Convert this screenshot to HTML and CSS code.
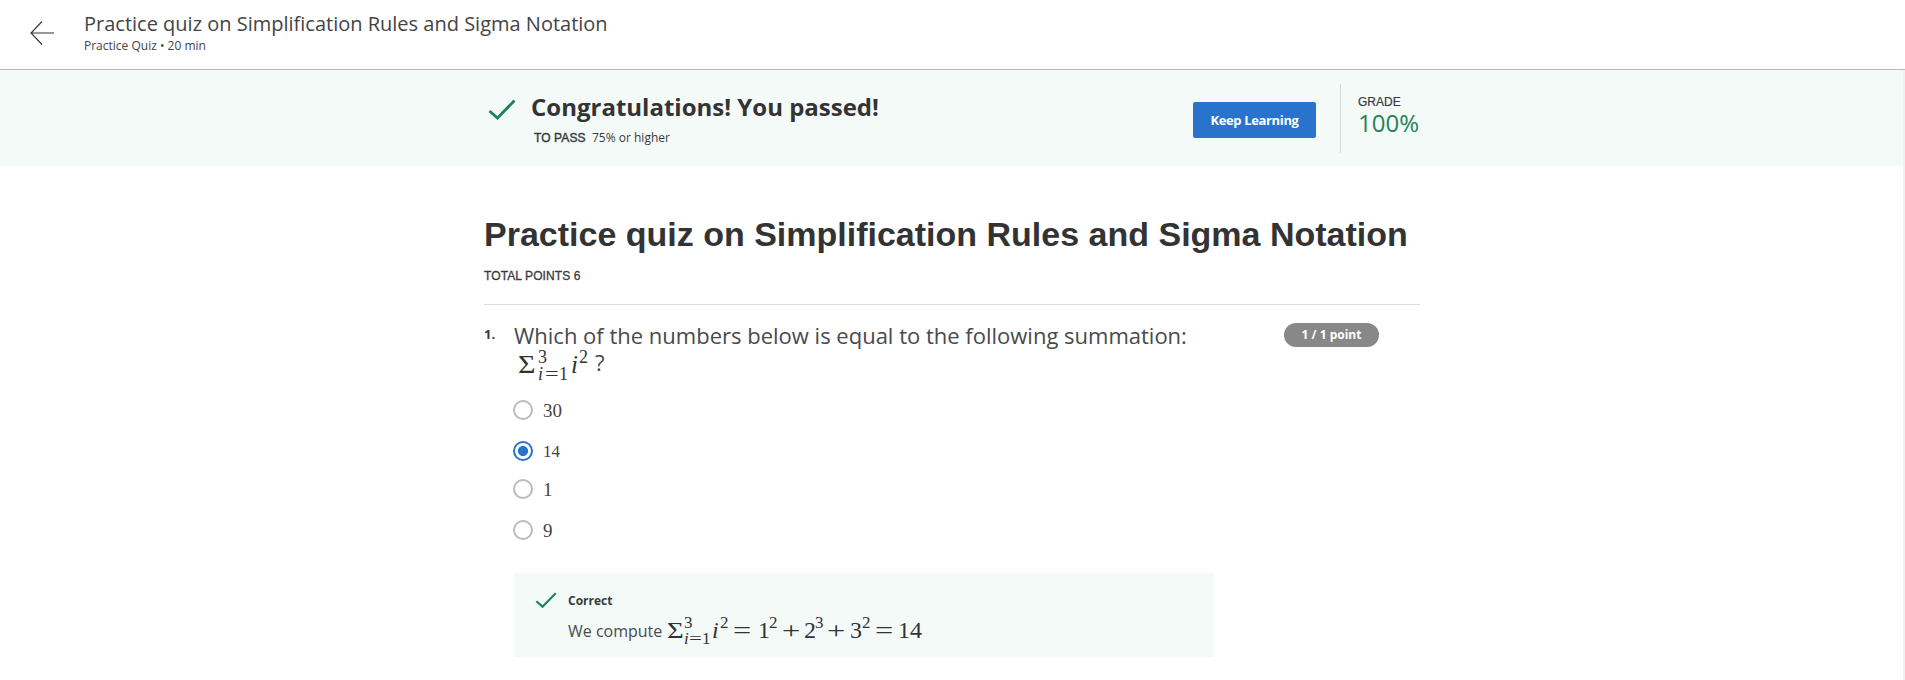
FILE: index.html
```html
<!DOCTYPE html>
<html lang="en">
<head>
<meta charset="utf-8">
<title>Practice quiz on Simplification Rules and Sigma Notation</title>
<link rel="stylesheet" href="styles.css">
</head>
<body>
<header class="topbar">
  <svg class="back" width="24" height="24" viewBox="0 0 24 24"><path d="M12 .5 1 12l11 11.500M1 12h23"/></svg>
  <div>
    <div class="topbar-title"><span>Practice quiz on Simplification Rules and Sigma Notation</span></div>
    <div class="topbar-sub"><span>Practice Quiz • 20 min</span></div>
  </div>
</header>
<div class="page">
  <div class="content">
    <section class="banner">
      <svg class="check" width="28" height="22" viewBox="0 0 28 22"><path d="M1.500 12 9.500 19 26.500 1.500"/></svg>
      <div class="banner-text">
        <div class="congrats"><span>Congratulations! You passed!</span></div>
        <div class="to-pass"><b>TO PASS</b><span>75% or higher</span></div>
      </div>
      <button class="keep"><span>Keep Learning</span></button>
      <div class="grade">
        <div class="grade-label"><span>GRADE</span></div>
        <div class="grade-value"><span>100%</span></div>
      </div>
    </section>
    <main class="quiz">
      <h1><span>Practice quiz on Simplification Rules and Sigma Notation</span></h1>
      <div class="points"><span>TOTAL POINTS 6</span></div>
      <section class="question">
        <div class="number">1.</div>
        <div class="body">
          <div class="prompt"><span>Which of the numbers below is equal to the following summation:</span></div>
          <div class="math math-q">
            <span class="sigma">Σ</span>
            <span class="scripts"><span class="up">3</span><span class="down"><i>i</i><span class="eq">=</span><span>1</span></span></span>
            <i>i</i><span class="up">2</span><span class="mark">?</span>
          </div>
          <div class="options">
            <label class="option"><span class="radio"></span><span>30</span></label>
            <label class="option picked"><span class="radio"></span><span>14</span></label>
            <label class="option"><span class="radio"></span><span>1</span></label>
            <label class="option"><span class="radio"></span><span>9</span></label>
          </div>
          <div class="feedback">
            <svg class="check small" width="22" height="17" viewBox="0 0 28 22"><path d="M1.500 12 9.500 19 26.500 1.500"/></svg>
            <div>
              <div class="correct"><span>Correct</span></div>
              <div class="explain">
                <span class="lead">We compute</span>
                <div class="math math-a">
                  <span class="sigma">Σ</span>
                  <span class="scripts"><span class="up">3</span><span class="down"><i>i</i><span class="eq">=</span><span>1</span></span></span>
                  <i>i</i><span class="up">2</span><span class="eq">=</span>
                  <span>1</span><span class="up">2</span><span class="plus">+</span>
                  <span>2</span><span class="up">3</span><span class="plus">+</span>
                  <span>3</span><span class="up">2</span><span class="eq">=</span>
                  <span>14</span>
                </div>
              </div>
            </div>
          </div>
        </div>
        <div class="pill"><span>1 / 1 point</span></div>
      </section>
    </main>
  </div>
  <div class="scroll-edge"></div>
</div>
</body>
</html>
```
FILE: styles.css
```css
* { box-sizing: border-box; }
body {
  margin: 0;
  height: 680px;
  overflow: hidden;
  background: #fff;
  color: #373a3c;
  font-family: "Open Sans", sans-serif;
  white-space: nowrap;
}
.topbar {
  height: 70px;
  border-bottom: 1px solid #b4bab8;
  display: flex;
  padding-left: 30px;
}
.back { margin: 21px 30px 0 0; fill: none; stroke: #333; stroke-width: 1.1; }
.topbar-title { margin-top: 10px; font-size: 20px; line-height: 28px; color: #444; }
.topbar-sub { font-size: 12px; line-height: 16px; color: #444; }
.page { display: flex; height: 610px; }
.content { flex: 1; }
.scroll-edge { width: 2px; background: #f1f1f1; }
.banner { height: 96px; background: #f4faf8; display: flex; padding-left: 488px; }
.check { flex: none; margin-top: 29px; fill: none; stroke: #1f8354; stroke-width: 2.8; }
.banner-text { flex: none; width: 677px; padding: 21px 0 0 15px; }
.congrats { font-size: 24px; line-height: 32px; font-weight: 700; color: #333; }
.to-pass { margin-top: 6px; font-size: 12px; line-height: 18px; display: flex; gap: 6px; padding-left: 3px; }
.to-pass b { width: 52px; font-family: "Liberation Sans", sans-serif; font-size: 12px; font-weight: 400; letter-spacing: .1px; -webkit-text-stroke: .4px; }
.keep {
  width: 123px; height: 36px; margin-top: 32px; padding: 0;
  border: 0; border-radius: 2px; background: #2a73cc; color: #fff;
  font: 700 13px "Open Sans", sans-serif; letter-spacing: -.35px;
}
.grade { height: 69px; margin: 14px 0 0 24px; padding: 9px 0 0 17px; border-left: 1px solid #d5dbd9; }
.grade-label { font: 12px/18px "Liberation Sans", sans-serif; -webkit-text-stroke: .2px; }
.grade-value { margin-top: -1px; font-size: 24px; line-height: 26px; color: #1f8354; }
.quiz { padding-left: 484px; }
h1 { margin: 0; padding-top: 46px; font: 700 34px/44px "Liberation Sans", sans-serif; color: #333; }
.points { width: 936px; height: 49px; padding-top: 11px; border-bottom: 1px solid #ddd; font: 12px/18px "Liberation Sans", sans-serif; letter-spacing: .1px; -webkit-text-stroke: .3px; }
.question { display: flex; }
.number { width: 29px; padding-top: 20px; font: 700 13px/18px "Open Sans", sans-serif; }
.body { width: 771px; }
.prompt { padding: 14px 0 0 1px; height: 45px; font-size: 22px; line-height: 32px; color: #484a4c; }
.math { display: grid; align-items: start; font-family: "Liberation Serif", serif; font-size: 25px; line-height: 25px; color: #333; }
.math .up { font-size: 18px; line-height: 18px; }
.scripts { display: flex; flex-direction: column; }
.down { display: grid; grid-template-columns: 8px 13px 10px; font-size: 18px; line-height: 16px; }
.eq, .plus { transform-origin: left; transform: scaleX(1.35); margin-left: -1px; }
.sigma { transform-origin: left; transform: scaleX(1.2); }
.math-q { grid-template-columns: 20px 33px 8px 16px 10px; padding-left: 5px; height: 50px; }
.math-q > span, .math-q > i { padding-top: 2px; }
.math-q > .up, .math-q > .scripts { padding-top: 0; margin-top: -2px; }
.math-q .mark { padding-top: 1px; font: 22px/22px "Open Sans", sans-serif; color: #484a4c; }
.options { display: grid; grid-template-rows: 41px 38px 41px 40px; }
.option { height: 20px; display: flex; align-items: center; gap: 10px; font: 19px/20px "Liberation Serif", serif; color: #444; }
.option span:last-child { padding-top: 1px; }
.radio { width: 20px; height: 20px; border: 2px solid #bbb; border-radius: 50%; background: #fff; }
.picked { font-size: 17px; }
.picked .radio { border-color: #2a73cc; background: radial-gradient(circle, #2a73cc 4.7px, #fff 5.4px); }
.feedback { width: 700px; height: 84px; margin: 13px 0 0 1px; background: #f4faf8; display: flex; padding-left: 21px; }
.small { margin: 19px 11px 0 0; }
.correct { padding-top: 19px; font-size: 12px; line-height: 18px; font-weight: 700; }
.explain { display: flex; padding-top: 8px; }
.lead { width: 99px; padding-top: 2px; font-size: 16px; line-height: 22px; color: #4a4c4e; }
.math-a { grid-template-columns: 17px 28px 8px 14px 24px 11px 14px 21px 11px 13px 22px 12px 14px 22px 24px; font-size: 24px; line-height: 24px; }
.math-a .up { font-size: 17px; line-height: 16px; }
.math-a .down { grid-template-columns: 6px 12px 8px; font-size: 17px; line-height: 16px; }
.math-a > .up, .math-a > .scripts { margin-top: -3px; }
.pill { height: 24px; width: 95px; margin-top: 18px; border-radius: 12px; background: #888; color: #fff; font-size: 12px; line-height: 24px; font-weight: 700; text-align: center; }
```
